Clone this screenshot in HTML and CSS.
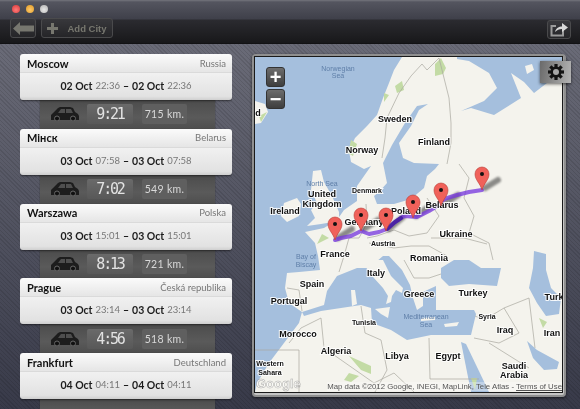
FILE: index.html
```html
<!doctype html>
<html lang="en">
    <head>
        <meta charset="UTF-8" />
        <title>Trip planner</title>
        <link rel="stylesheet" href="styles.css">
    </head>
    <body>
        <div class="window">
            <header class="titlebar">
                <div class="lights">
                    <span class="light red"></span>
                    <span class="light yellow"></span>
                    <span class="light grey"></span>
                </div>
                <div class="tools">
                    <button class="tool back">
                        <svg width="21" height="13" viewBox="0 0 21 13"><path d="M0 6.5 7 0v3.5h14v6H7V13z" fill="#77776f"/></svg>
                    </button>
                    <button class="tool add">
                        <svg width="11" height="11" viewBox="0 0 11 11"><path d="M4 0h3v4h4v3H7v4H4V7H0V4h4z" fill="#77776f"/></svg>
                        Add City
                    </button>
                    <button class="tool share">
                        <svg width="18" height="14" viewBox="0 0 18 14"><path d="M13 5.500V12.500H1.500V3H6" fill="none" stroke="#9a9a9a" stroke-width="2"/><path d="M5 9C6 5 9 3.500 12 3.500V0l6 4.500-6 4.500V6C9 6 7 7 5 9z" fill="#d8d8d8"/></svg>
                    </button>
                </div>
            </header>

            <main class="content">
                <section class="trip">
                    <article class="city">
                        <div class="city-head"><strong>Moscow</strong><span>Russia</span></div>
                        <div class="city-dates"><b>02 Oct</b> <i>22:36</i> <b>–</b> <b>02 Oct</b> <i>22:36</i></div>
                    </article>
                    <div class="leg">
                        <svg class="car" viewBox="0 0 30 14"><path d="M1 13V8l2-2 5-5 2-1h10l3 1 2 4 3 2 1 2v4H1z" fill="#1d1d1d"/><path d="M8 6l3-4h4v4zM16 2h5l2 4h-7z" fill="#4e4e4e"/><circle cx="7" cy="11.500" r="2.500" fill="#111" stroke="#666"/><circle cx="23" cy="11.500" r="2.500" fill="#111" stroke="#666"/></svg>
                        <div class="time">9:21</div>
                        <div class="km">715 km.</div>
                    </div>
                    <article class="city">
                        <div class="city-head"><strong>Мінск</strong><span>Belarus</span></div>
                        <div class="city-dates"><b>03 Oct</b> <i>07:58</i> <b>–</b> <b>03 Oct</b> <i>07:58</i></div>
                    </article>
                    <div class="leg">
                        <svg class="car" viewBox="0 0 30 14"><path d="M1 13V8l2-2 5-5 2-1h10l3 1 2 4 3 2 1 2v4H1z" fill="#1d1d1d"/><path d="M8 6l3-4h4v4zM16 2h5l2 4h-7z" fill="#4e4e4e"/><circle cx="7" cy="11.500" r="2.500" fill="#111" stroke="#666"/><circle cx="23" cy="11.500" r="2.500" fill="#111" stroke="#666"/></svg>
                        <div class="time">7:02</div>
                        <div class="km">549 km.</div>
                    </div>
                    <article class="city">
                        <div class="city-head"><strong>Warszawa</strong><span>Polska</span></div>
                        <div class="city-dates"><b>03 Oct</b> <i>15:01</i> <b>–</b> <b>03 Oct</b> <i>15:01</i></div>
                    </article>
                    <div class="leg">
                        <svg class="car" viewBox="0 0 30 14"><path d="M1 13V8l2-2 5-5 2-1h10l3 1 2 4 3 2 1 2v4H1z" fill="#1d1d1d"/><path d="M8 6l3-4h4v4zM16 2h5l2 4h-7z" fill="#4e4e4e"/><circle cx="7" cy="11.500" r="2.500" fill="#111" stroke="#666"/><circle cx="23" cy="11.500" r="2.500" fill="#111" stroke="#666"/></svg>
                        <div class="time">8:13</div>
                        <div class="km">721 km.</div>
                    </div>
                    <article class="city">
                        <div class="city-head"><strong>Prague</strong><span>Česká republika</span></div>
                        <div class="city-dates"><b>03 Oct</b> <i>23:14</i> <b>–</b> <b>03 Oct</b> <i>23:14</i></div>
                    </article>
                    <div class="leg">
                        <svg class="car" viewBox="0 0 30 14"><path d="M1 13V8l2-2 5-5 2-1h10l3 1 2 4 3 2 1 2v4H1z" fill="#1d1d1d"/><path d="M8 6l3-4h4v4zM16 2h5l2 4h-7z" fill="#4e4e4e"/><circle cx="7" cy="11.500" r="2.500" fill="#111" stroke="#666"/><circle cx="23" cy="11.500" r="2.500" fill="#111" stroke="#666"/></svg>
                        <div class="time">4:56</div>
                        <div class="km">518 km.</div>
                    </div>
                    <article class="city">
                        <div class="city-head"><strong>Frankfurt</strong><span>Deutschland</span></div>
                        <div class="city-dates"><b>04 Oct</b> <i>04:11</i> <b>–</b> <b>04 Oct</b> <i>04:11</i></div>
                    </article>
                    <div class="leg"></div>
                </section>

                <section class="map-frame">
                    <div class="map">
                        <svg class="map-art" viewBox="256 59 307 335" width="307" height="335">
                            <rect x="256" y="59" width="307" height="335" fill="#a5bfdd"/>
                            <!-- terre -->
                            <g fill="#f4f3ed">
                                <path d="M403 59 395 72 390 85 384 100 378 117 368 128 356 140 350 153 352 164 365 171 372 168 358 188 358 203 345 212 338 222 325 230 306 234 316 245 319 258 321 272 300 274 288 275 286 290 290 305 303 314 300 325 285 345 270 365 258 385 256 394 563 394 563 78 548 85 535 95 525 84 512 75 522 100 495 117 472 110 462 113 485 103 498 90 490 75 470 63 458 61 458 59Z"/>
                                <path d="M314 173 322 172 325 184 333 198 340 214 340 223 322 226 308 228 316 220 312 212 318 205 312 192Z"/>
                                <path d="M285 205 298 200 302 206 300 218 288 224 282 218Z"/>
                                <path d="M256 103 266 106 269 114 262 125 256 126Z"/>
                                <path d="M526 68 533 66 535 72 528 76Z"/>
                            </g>
                            <!-- mari interni -->
                            <g fill="#a5bfdd">
                                <path d="M429 106 420 112 412 128 400 145 404 160 415 165 440 166 436 171 428 178 425 190 412 201 395 206 378 206 375 198 380 194 388 185 384 165 393 147 406 125 418 108Z"/>
                                <path d="M303 314 325 307 328 293 338 278 358 270 370 270 384 258 390 258 403 272 411 287 414 300 418 312 424 308 424 294 437 288 437 312 475 312 477 316 472 337 432 337 408 342 392 332 373 325 372 310 362 307 322 313 305 318Z"/>
                                <path d="M442 270 455 262 470 262 482 270 502 270 498 288 470 286 450 288 442 280Z"/>
                                <path d="M462 344 467 346 490 394 472 394Z"/>
                                <path d="M528 343 538 352 560 364 558 371 545 372 534 360Z"/>
                                <path d="M535 253 547 256 547 272 552 290 562 300 560 316 547 318 538 305 530 290 534 270Z"/>
                            </g>
                            <g fill="#f4f3ed">
                                <path d="M366 268 378 262 384 262 392 278 404 290 403 295 397 292 393 298 392 304 387 306 389 298 384 290 374 279Z"/>
                                <path d="M352 292 356 292 358 306 353 308Z"/>
                                <path d="M376 311 391 309 389 320 382 316Z"/>
                                <path d="M422 320 436 319 436 322 422 323Z"/>
                                <path d="M445 326 460 324 458 328 446 329Z"/>
                            </g>
                            <!-- verde -->
                            <g fill="#c3dba5">
                                <path d="M436 66 442 60 447 70 444 76 436 78ZM396 88 403 83 405 92 398 95ZM385 95 390 97 385 104ZM352 142 358 146 354 158 349 155ZM323 236 330 240 318 246ZM350 358 372 368 372 376 362 372ZM350 375 360 378 352 384 345 382ZM472 380 478 380 476 392ZM540 320 548 324 544 330ZM260 118 268 114 262 124Z"/>
                            </g>
                            <!-- confini -->
                            <g fill="none" stroke="#a9a89f" stroke-width=".7">
                                <path d="M440 60 428 72 423 66 412 78 400 95 388 120 386 140 383 160"/>
                                <path d="M440 60 445 80 450 100 452 125 452 145 448 166"/>
                                <path d="M460 166 470 180 465 200 475 218 470 235 490 245 494 262"/>
                                <path d="M367 206 368 225 360 240 350 240 345 258 340 274"/>
                                <path d="M428 200 440 218 428 235 410 238 395 232 378 238 368 240"/>
                                <path d="M432 240 448 240 465 240 488 246"/>
                                <path d="M370 245 395 250 412 248 430 248 448 258"/>
                                <path d="M405 262 415 280 430 280 442 276"/>
                                <path d="M288 290 300 292 303 313"/>
                                <path d="M362 308 366 335 382 342 388 372 376 394"/>
                                <path d="M430 340 431 381 480 381"/>
                                <path d="M290 345 302 330 322 320 325 350 375 385 395 375 415 394"/>
                                <path d="M300 352 256 352M300 352 300 394"/>
                                <path d="M475 340 500 345 520 335 505 310 485 322 476 318"/>
                                <path d="M505 310 530 300 536 350"/>
                                <path d="M490 345 530 370"/>
                            </g>
                            <!-- percorso -->
                            <g class="pin-shadows">
                                <path d="M486 190 499 182M445 206 459 197M417 218 431 208M390 231 404 219M365 231 379 222M339 240 353 231"/>
                            </g>
                            <path d="M483 192 470 194 458 197 445 201 440 207 430 213 418 219 405 218 396 224 388 231 380 234 370 236 362 233 352 238 342 240 336 242" fill="none" stroke="#7433dd" stroke-width="4" stroke-linejoin="round" stroke-linecap="round" opacity=".75"/>
                            <path d="M402 220 396 224 388 231" fill="none" stroke="#3f1a9a" stroke-width="4" stroke-linecap="round" opacity=".8"/>
                            <!-- etichette -->
                            <g class="label">
                                <text x="396" y="124">Sweden</text>
                                <text x="435" y="147">Finland</text>
                                <text x="363" y="155">Norway</text>
                                <text x="323" y="199">United</text>
                                <text x="323" y="208.500">Kingdom</text>
                                <text x="286" y="216">Ireland</text>
                                <text x="365" y="227">Germany</text>
                                <text x="407" y="216">Poland</text>
                                <text x="443" y="210">Belarus</text>
                                <text x="457" y="239">Ukraine</text>
                                <text x="336" y="259">France</text>
                                <text x="430" y="263">Romania</text>
                                <text x="377" y="278">Italy</text>
                                <text x="313" y="289">Spain</text>
                                <text x="290" y="306">Portugal</text>
                                <text x="420" y="299">Greece</text>
                                <text x="474" y="298">Turkey</text>
                                <text x="506" y="335">Iraq</text>
                                <text x="553" y="338">Iran</text>
                                <text x="555" y="302">Turk</text>
                                <text x="299" y="339">Morocco</text>
                                <text x="337" y="356">Algeria</text>
                                <text x="398" y="361">Libya</text>
                                <text x="449" y="361">Egypt</text>
                                <text x="515" y="371">Saudi</text>
                                <text x="515" y="379.500">Arabia</text>
                                <text x="259" y="118">d</text>
                            </g>
                            <g class="label small">
                                <text x="368" y="195">Denmark</text>
                                <text x="384" y="248">Austria</text>
                                <text x="365" y="327">Tunisia</text>
                                <text x="488" y="321">Syria</text>
                                <text x="271" y="368">Western</text>
                                <text x="271" y="376.500">Sahara</text>
                            </g>
                            <g class="label sea">
                                <text x="339" y="73">Norwegian</text>
                                <text x="339" y="80">Sea</text>
                                <text x="323" y="188">North Sea</text>
                                <text x="307" y="261">Bay of</text>
                                <text x="307" y="268.500">Biscay</text>
                                <text x="427" y="321">Mediterranean</text>
                                <text x="427" y="328.500">Sea</text>
                            </g>
                            <!-- marcatori -->
                            <g fill="#f0615a" stroke="#b83c36" stroke-width=".6">
                                <path d="M483 192C481 185 476 182 476 176A7 7 0 0 1 490 176C490 182 485 185 483 192Z"/>
                                <path d="M442 208C440 201 435 198 435 192A7 7 0 0 1 449 192C449 198 444 201 442 208Z"/>
                                <path d="M414 220C412 213 407 210 407 204A7 7 0 0 1 421 204C421 210 416 213 414 220Z"/>
                                <path d="M387 233C385 226 380 223 380 217A7 7 0 0 1 394 217C394 223 389 226 387 233Z"/>
                                <path d="M362 233C360 226 355 223 355 217A7 7 0 0 1 369 217C369 223 364 226 362 233Z"/>
                                <path d="M336 242C334 235 329 232 329 226A7 7 0 0 1 343 226C343 232 338 235 336 242Z"/>
                            </g>
                            <g fill="#111">
                                <circle cx="483" cy="176" r="2"/><circle cx="442" cy="192" r="2"/><circle cx="414" cy="204" r="2"/><circle cx="387" cy="217" r="2"/><circle cx="362" cy="217" r="2"/><circle cx="336" cy="226" r="2"/>
                            </g>
                            <text class="logo" x="257" y="390">Google</text>
                        </svg>
                        <div class="zoom-controls">
                            <button class="zoom-btn">+</button>
                            <button class="zoom-btn">−</button>
                        </div>
                        <div class="credits">Map data ©2012 Google, INEGI, MapLink, Tele Atlas - <u>Terms of Use</u></div>
                    </div>
                    <button class="gear">
                        <svg width="16" height="16" viewBox="-8 -8 16 16"><g fill="#141414"><rect x="-1.600" y="-8" width="3.200" height="16"/><rect x="-1.600" y="-8" width="3.200" height="16" transform="rotate(45)"/><rect x="-1.600" y="-8" width="3.200" height="16" transform="rotate(90)"/><rect x="-1.600" y="-8" width="3.200" height="16" transform="rotate(135)"/><circle r="5.500"/></g><circle r="3" fill="#a8a8a8"/></svg>
                    </button>
                </section>
            </main>
        </div>
    </body>
</html>
```

FILE: styles.css
```css
html,
body {
    margin: 0;
    height: 100%;
    overflow: hidden;
}
body {
    font-family: Lato, sans-serif;
    background-color: #3b3d4b;
}
.window {
    display: flex;
    flex-direction: column;
    height: 409px;
    background-color: #555663;
    background-image: repeating-linear-gradient(45deg, rgba(0, 0, 0, 0.1) 0 1px, transparent 1px 3px),
        linear-gradient(#70717d, #383a49);
    filter: blur(0.35px);
}
/* Barra in alto */
.titlebar {
    height: 44px;
    box-sizing: border-box;
    padding: 5px 9px 0 10px;
    background: linear-gradient(#74757c 0, #54555f 2px, #3f404a 19px, #2b2b30 20px, #171719 44px);
    border-bottom: 1px solid #121214;
}
.lights {
    display: flex;
    gap: 6px;
    padding-left: 2px;
}
.light {
    width: 8px;
    height: 8px;
    border-radius: 50%;
}
.red {
    background: radial-gradient(circle at 50% 60%, #ff7a78, #d8383a);
}
.yellow {
    background: radial-gradient(circle at 50% 60%, #ffc869, #dd9a24);
}
.grey {
    background: radial-gradient(circle at 50% 60%, #e8e8e8, #b0b0b0);
}
.tools {
    display: flex;
    gap: 5px;
    margin-top: 5px;
}
.tool {
    display: flex;
    align-items: center;
    justify-content: center;
    gap: 9px;
    height: 20px;
    padding: 0;
    border: 1px solid #4a4a4c;
    border-radius: 3px;
    background: linear-gradient(#38383c, #252528);
    color: #77776f;
    font-family: "Liberation Sans", sans-serif;
    font-size: 9.5px;
    font-weight: bold;
}
.back {
    width: 26px;
}
.add {
    width: 72px;
}
.share {
    width: 24px;
    height: 19px;
    margin-left: auto;
    margin-top: 2px;
}
/* Contenuto */
.content {
    flex: 1;
    display: flex;
    min-height: 0;
    padding: 10px 14px 0 20px;
}
.trip {
    width: 212px;
    margin-right: 20px;
    overflow: hidden;
}
.city {
    position: relative;
    height: 46px;
    box-sizing: border-box;
    border-radius: 3px;
    background: linear-gradient(#fbfbfb, #e6e6e6 38%, #f1f1f1 40%, #e2e2e2 92%, #cfcfcf);
    box-shadow: 0 1px 2px rgba(0, 0, 0, 0.5);
}
.city-head {
    display: flex;
    justify-content: space-between;
    align-items: center;
    height: 18px;
    padding: 0 6px 0 7px;
    border-bottom: 1px solid #dadada;
}
.city-head strong {
    font-size: 11px;
    font-weight: 700;
    color: #111;
}
.city-head span {
    font-size: 9.5px;
    color: #777;
}
.city-dates {
    display: flex;
    justify-content: center;
    gap: 3px;
    margin-top: 6px;
    font-size: 10.5px;
    line-height: 14px;
    color: #1c1c1c;
}
.city-dates b {
    font-weight: 700;
}
.city-dates i {
    font-size: 9.5px;
    font-style: normal;
    color: #777;
}
.leg {
    display: flex;
    align-items: center;
    height: 28.75px;
    margin: 0 17px 0 20px;
    background: linear-gradient(#4c4c4c, #5a5a5a 60%, #4e4e4e);
    box-shadow: 0 0 1px #2b2b2b;
}
.leg:last-child {
    height: 20px;
}
.car {
    width: 30px;
    height: 14px;
    margin-left: 10px;
}
.time,
.km {
    height: 20px;
    line-height: 20px;
    text-align: center;
    border-radius: 2px;
    background: #5f5f5f;
    color: #d9d9d9;
}
.time {
    width: 46px;
    margin-left: 7px;
    font-family: "DejaVu Sans Mono", monospace;
    font-size: 15px;
    letter-spacing: -2.200px;
    color: #e2e2e2;
    background: linear-gradient(#6a6a6a, #585858);
}
.km {
    width: 45px;
    margin-left: 9px;
    font-size: 10.5px;
    letter-spacing: 0.3px;
}
/* Mappa */
.map-frame {
    position: relative;
    width: 314px;
    height: 343px;
    box-sizing: border-box;
    padding: 1px;
    border-radius: 4px;
    background: linear-gradient(#9d9d9d, #c9c9c9 50%, #c4c4c4);
    box-shadow: 0 1px 3px rgba(0, 0, 0, 0.6);
    border: 2px solid #8f8f8f;
}
.map {
    position: relative;
    width: 307px;
    height: 335px;
    overflow: hidden;
    outline: 1px solid #1a1a1a;
}
.map-art {
    display: block;
}
.pin-shadows path {
    fill: none;
    stroke: #444;
    stroke-width: 6px;
    stroke-linecap: round;
    opacity: 0.6;
    filter: blur(1.2px);
}
.label text {
    font-family: "Liberation Sans", sans-serif;
    font-size: 9px;
    font-weight: bold;
    text-anchor: middle;
    fill: #111;
    stroke: rgba(255, 255, 255, 0.85);
    stroke-width: 2px;
    paint-order: stroke;
}
.label.small text {
    font-size: 7px;
}
.label.sea text {
    font-size: 7px;
    font-weight: normal;
    fill: #5f7fa8;
    stroke: none;
}
.logo {
    font-family: "Liberation Sans", sans-serif;
    font-size: 13px;
    font-weight: bold;
    fill: rgba(255, 255, 255, 0.55);
    stroke: rgba(120, 120, 120, 0.6);
    stroke-width: 0.5px;
}
.zoom-controls {
    position: absolute;
    left: 11px;
    top: 10px;
    display: flex;
    flex-direction: column;
    gap: 2px;
}
.zoom-btn {
    width: 19px;
    height: 20px;
    padding: 0;
    border: 1px solid #333;
    border-radius: 3px;
    background: linear-gradient(#6d6d6d, #3e3e3e);
    color: #fff;
    font-family: "Liberation Sans", sans-serif;
    font-size: 20px;
    font-weight: bold;
    line-height: 16px;
}
.credits {
    position: absolute;
    right: 0;
    bottom: 1px;
    font-family: "Liberation Sans", sans-serif;
    font-size: 7.8px;
    white-space: nowrap;
    color: #555;
    background: rgba(255, 255, 255, 0.3);
}
.gear {
    position: absolute;
    right: -7px;
    top: 5px;
    display: flex;
    align-items: center;
    justify-content: center;
    width: 31px;
    height: 22px;
    padding: 0;
    border: none;
    background: linear-gradient(100deg, #6a6a6a, #b4b4b4);
    box-shadow: 0 1px 3px rgba(0, 0, 0, 0.6);
}
```
